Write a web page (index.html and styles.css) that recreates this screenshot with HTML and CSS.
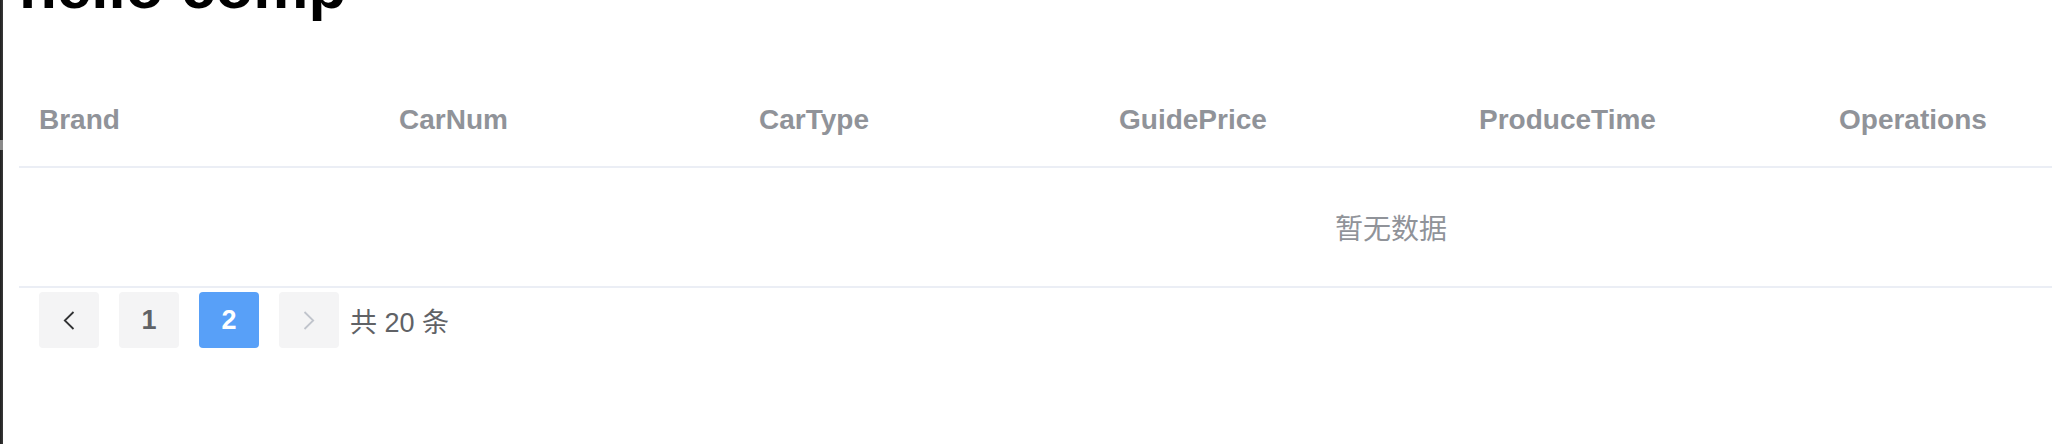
FILE: index.html
```html
<!DOCTYPE html>
<html lang="zh">
<head>
<meta charset="utf-8">
<title>hello comp</title>
<link rel="stylesheet" href="styles.css">
</head>
<body>
<div class="page">
  <div class="edge"><span class="edge-mark"></span></div>
  <main class="content">
    <h1 class="title">hello comp</h1>
    <div class="table">
      <div class="thead">
        <div class="th">Brand</div>
        <div class="th">CarNum</div>
        <div class="th">CarType</div>
        <div class="th">GuidePrice</div>
        <div class="th">ProduceTime</div>
        <div class="th">Operations</div>
        <div class="th"></div>
      </div>
      <div class="empty"><span class="empty-text">暂无数据</span></div>
    </div>
    <div class="pagination">
      <button class="pg-btn prev" type="button">
        <svg width="12" height="19" viewBox="0 0 12 19"><path d="M10.5 1 L1.8 9.5 L10.5 18" fill="none" stroke="#303133" stroke-width="1.8"/></svg>
      </button>
      <button class="pg-btn num" type="button">1</button>
      <button class="pg-btn num active" type="button">2</button>
      <button class="pg-btn next" type="button">
        <svg width="12" height="19" viewBox="0 0 12 19"><path d="M1.5 1 L10.2 9.5 L1.5 18" fill="none" stroke="#c0c4cc" stroke-width="1.8"/></svg>
      </button>
      <span class="total">共 20 条</span>
    </div>
  </main>
</div>
</body>
</html>
```

FILE: styles.css
```css
html, body {
  margin: 0;
  padding: 0;
  background: #ffffff;
  overflow: hidden;
}

.page {
  display: flex;
  height: 444px;
  width: 2052px;
  overflow: hidden;
  font-family: "Liberation Sans", "Noto Sans CJK SC", sans-serif;
}

.edge {
  position: relative;
  flex: 0 0 3px;
  background: linear-gradient(to right, #1f1f1f, #3a3a3a);
}

.edge-mark {
  position: absolute;
  left: 0;
  top: 140px;
  width: 3px;
  height: 10px;
  background: #8a8a8a;
}

.content {
  flex: 1;
  min-width: 0;
  padding-left: 16px;
}

.title {
  margin: -44px 0 52px 0;
  height: 62px;
  font-size: 62px;
  line-height: 62px;
  font-weight: 700;
  color: #000000;
  white-space: nowrap;
}

.table {
  width: 2744px;
}

.thead {
  display: grid;
  grid-template-columns: repeat(6, 360px) 1fr;
  height: 96px;
  border-bottom: 2px solid #ebeef5;
}

.th {
  display: flex;
  align-items: center;
  padding: 3px 0 0 20px;
  font-size: 28px;
  font-weight: 700;
  color: #909399;
}

.empty {
  display: flex;
  align-items: center;
  justify-content: center;
  height: 118px;
  border-bottom: 2px solid #ebeef5;
}

.empty-text {
  font-size: 28px;
  color: #909399;
}

.pagination {
  display: flex;
  align-items: center;
  padding: 4px 10px;
}

.pg-btn {
  display: flex;
  align-items: center;
  justify-content: center;
  width: 60px;
  height: 56px;
  margin: 0 10px;
  padding: 0;
  border: none;
  border-radius: 4px;
  background: #f4f4f5;
  font-family: "Liberation Sans", sans-serif;
  font-size: 27px;
  font-weight: 700;
  color: #606266;
}

.pg-btn.active {
  background: #58a0f8;
  color: #ffffff;
}

.total {
  margin-left: 1px;
  font-size: 27px;
  color: #606266;
  white-space: nowrap;
}
```
